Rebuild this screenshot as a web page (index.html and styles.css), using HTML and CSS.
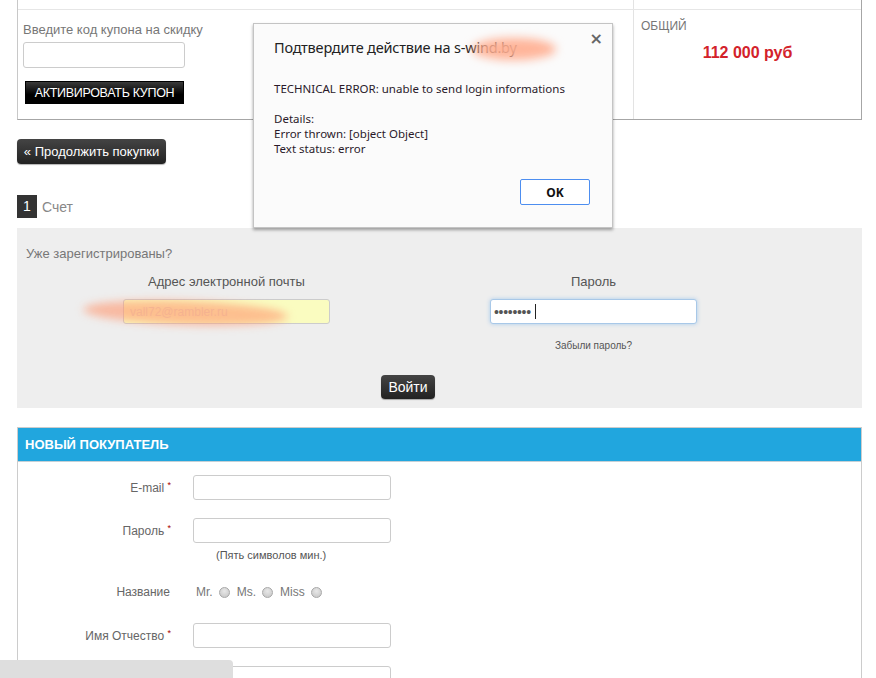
FILE: index.html
```html
<!DOCTYPE html>
<html lang="ru">
<head>
    <meta charset="UTF-8">
    <meta name="viewport" content="width=device-width, initial-scale=1.0">
    <title>Оформление заказа</title>
    <link rel="stylesheet" href="styles.css">
</head>
<body>

<div class="page">

    <!-- корзина: купон и итог -->
    <div class="cart">
        <div class="cart-row cart-prev">
            <div class="cell"></div>
            <div class="cell cell-total"></div>
        </div>
        <div class="cart-row">
            <div class="cell coupon">
                <label class="coupon-label">Введите код купона на скидку</label>
                <input class="field coupon-input" type="text">
                <button class="btn-black">АКТИВИРОВАТЬ КУПОН</button>
            </div>
            <div class="cell cell-total">
                <div class="total-label">ОБЩИЙ</div>
                <div class="total-sum">112 000 руб</div>
            </div>
        </div>
    </div>

    <button class="btn-dark btn-continue">« Продолжить покупки</button>

    <div class="step">
        <span class="step-num">1</span>
        <span class="step-title">Счет</span>
    </div>

    <!-- вход для зарегистрированных -->
    <div class="login">
        <p class="login-title">Уже зарегистрированы?</p>
        <div class="login-cols">
            <div class="login-col">
                <label class="login-label">Адрес электронной почты</label>
                <div class="email-wrap">
                    <input class="field login-input autofill" type="text" value="vall72@rambler.ru">
                    <div class="smear smear-email"></div>
                </div>
            </div>
            <div class="login-col">
                <label class="login-label">Пароль</label>
                <div class="pass-wrap">
                    <input class="field login-input focused" type="password" value="12345678">
                    <span class="caret"></span>
                </div>
                <a class="forgot">Забыли пароль?</a>
            </div>
        </div>
        <div class="login-actions">
            <button class="btn-dark btn-login">Войти</button>
        </div>
    </div>

    <!-- новый покупатель -->
    <div class="register">
        <div class="register-head">НОВЫЙ ПОКУПАТЕЛЬ</div>
        <div class="register-body">
            <div class="form-row">
                <label class="form-label">E-mail <span class="req">*</span></label>
                <input class="field form-input" type="text">
            </div>
            <div class="form-row">
                <label class="form-label">Пароль <span class="req">*</span></label>
                <input class="field form-input" type="password">
            </div>
            <div class="hint">(Пять символов мин.)</div>
            <div class="form-row radio-row">
                <label class="form-label">Название</label>
                <div class="radios">
                    <span>Mr.</span><input class="radio" type="radio" name="title">
                    <span>Ms.</span><input class="radio" type="radio" name="title">
                    <span>Miss</span><input class="radio" type="radio" name="title">
                </div>
            </div>
            <div class="form-row">
                <label class="form-label">Имя Отчество <span class="req">*</span></label>
                <input class="field form-input" type="text">
            </div>
            <div class="form-row">
                <label class="form-label"></label>
                <input class="field form-input" type="text">
            </div>
        </div>
    </div>

</div>

<!-- окно браузера с ошибкой -->
<div class="dialog">
    <span class="dialog-close">×</span>
    <div class="dialog-title">Подтвердите действие на s-wind.by</div>
    <div class="smear smear-title"></div>
    <div class="dialog-text">
        TECHNICAL ERROR: unable to send login informations<br><br>
        Details:<br>
        Error thrown: [object Object]<br>
        Text status: error
    </div>
    <div class="dialog-foot">
        <button class="dialog-ok">OK</button>
    </div>
</div>

<div class="statusbar"></div>

</body>
</html>
```

FILE: styles.css
```css
/* общие */
body {
    margin: 0;
    font-family: 'Liberation Sans', Arial, sans-serif;
    font-size: 13px;
    color: #555;
    background: #fff;
}

.page {
    width: 845px;
    padding-left: 17px;
    padding-bottom: 40px;
}

button {
    font-family: inherit;
    cursor: pointer;
}

.field {
    box-sizing: border-box;
    border: 1px solid #ccc;
    border-radius: 3px;
    background: #fff;
    font-family: inherit;
    font-size: 12px;
    padding: 0 6px;
    outline: none;
}

/* корзина */
.cart {
    border-left: 1px solid #c8c8c8;
    border-right: 1px solid #a6a6a6;
    border-bottom: 1px solid #a6a6a6;
}

.cart-row {
    display: grid;
    grid-template-columns: 615px 1fr;
    height: 109px;
}

.cart-prev {
    height: 9px;
    border-bottom: 1px solid #e6e6e6;
}

.cell-total {
    border-left: 1px solid #e3e3e3;
}

.coupon {
    padding: 12px 0 0 5px;
}

.coupon-label {
    display: block;
    font-size: 13px;
    line-height: 16px;
    color: #777;
}

.coupon-input {
    display: block;
    width: 162px;
    height: 26px;
    margin-top: 4px;
}

.btn-black {
    display: block;
    margin: 13px 0 0 2px;
    width: 159px;
    height: 23px;
    padding: 0;
    border: 1px solid #000;
    background: linear-gradient(#3a3a3a, #000 60%);
    color: #fff;
    font-size: 12.5px;
    letter-spacing: -0.3px;
}

.cell-total {
    padding: 9px 7px 0;
}

.total-label {
    font-size: 12px;
    line-height: 14px;
    color: #777;
}

.total-sum {
    margin-top: 10px;
    text-align: center;
    font-size: 16px;
    line-height: 20px;
    font-weight: bold;
    color: #d3222a;
}

/* тёмные кнопки */
.btn-dark {
    border: none;
    border-radius: 4px;
    background: linear-gradient(#444, #222);
    color: #fff;
    box-shadow: 0 1px 1px rgba(0, 0, 0, .3);
}

.btn-continue {
    display: block;
    margin-top: 19px;
    width: 149px;
    height: 25px;
    padding: 0;
    font-size: 13px;
}

/* шаг */
.step {
    display: flex;
    align-items: center;
    gap: 5px;
    margin-top: 31px;
}

.step-num {
    width: 20px;
    height: 23px;
    line-height: 23px;
    text-align: center;
    background: #333;
    color: #fff;
    font-size: 14px;
}

.step-title {
    font-size: 14px;
    color: #888;
}

/* вход */
.login {
    margin-top: 10px;
    background: #eee;
    padding: 18px 0 9px 9px;
}

.login-title {
    margin: 0;
    font-size: 13px;
    line-height: 16px;
    color: #777;
}

.login-cols {
    display: grid;
    grid-template-columns: 367px 367px;
    margin-left: 17px;
}

.login-col {
    display: flex;
    flex-direction: column;
    align-items: center;
}

.login-label {
    margin-top: 12px;
    font-size: 13px;
    line-height: 16px;
    color: #555;
}

.email-wrap,
.pass-wrap {
    position: relative;
    margin-top: 9px;
}

.login-input {
    display: block;
    width: 207px;
    height: 25px;
    font-size: 12px;
}

.autofill {
    background: #fafcc0;
    color: #e6dcc0;
}

.focused {
    border-color: #a8c8e8;
    box-shadow: 0 0 4px #a9cbeb;
    color: #555;
    font-size: 14px;
    padding-left: 3px;
    letter-spacing: -0.3px;
}

.caret {
    position: absolute;
    left: 45px;
    top: 5px;
    width: 1px;
    height: 15px;
    background: #222;
}

.forgot {
    margin-top: 15px;
    font-size: 10px;
    line-height: 14px;
    color: #555;
}

.login-actions {
    width: 730px;
    margin: 22px 0 0 17px;
    text-align: center;
}

.btn-login {
    width: 54px;
    height: 24px;
    padding: 0;
    font-size: 14px;
}

/* размытые пятна */
.smear {
    position: absolute;
    border-radius: 50%;
    filter: blur(4px);
    background: rgba(255, 150, 110, .6);
}

.smear-email {
    left: -40px;
    top: 2px;
    width: 205px;
    height: 24px;
    transform: rotate(2deg);
}

/* новый покупатель */
.register {
    margin-top: 19px;
    border: 1px solid #ccc;
}

.register-head {
    height: 33px;
    line-height: 33px;
    padding-left: 7px;
    background: #21a6de;
    border-bottom: 1px solid #c4d0d6;
    color: #fff;
    font-size: 13px;
    font-weight: bold;
}

.register-body {
    padding-top: 13px;
}

.form-row {
    display: grid;
    grid-template-columns: 153px 198px;
    column-gap: 22px;
    align-items: center;
    margin-bottom: 18px;
}

.form-label {
    text-align: right;
    font-size: 12px;
    line-height: 14px;
    color: #666;
    margin-top: -3px;
}

.req {
    color: #a00;
    font-size: 9px;
    vertical-align: 4px;
}

.form-input {
    width: 198px;
    height: 25px;
}

.hint {
    margin: -13px 0 0 198px;
    font-size: 11px;
    line-height: 14px;
    color: #555;
}

.radio-row {
    margin-top: 22px;
    margin-bottom: 23px;
    height: 16px;
}

.radio-row .form-label {
    padding-right: 1px;
    margin-top: 0;
}

.radios {
    display: flex;
    align-items: center;
    padding-left: 3px;
    font-size: 12px;
    color: #777;
}

.radio {
    appearance: none;
    box-sizing: border-box;
    width: 11px;
    height: 11px;
    margin: 0 7px 0 6px;
    border: 1px solid #a8a8a8;
    border-radius: 50%;
    background: radial-gradient(circle at 50% 35%, #e8e8e8, #c4c4c4);
}

/* окно подтверждения */
.dialog {
    position: absolute;
    left: 253px;
    top: 23px;
    box-sizing: border-box;
    width: 360px;
    height: 205px;
    display: flex;
    flex-direction: column;
    padding: 13px 22px 22px 20px;
    background: #fbfbfb;
    border: 1px solid #c4c4c4;
    box-shadow: 0 2px 3px rgba(0, 0, 0, .35);
    font-family: 'Noto Sans', 'Open Sans', sans-serif;
    color: #222;
}

.dialog-close {
    position: absolute;
    top: 5px;
    right: 9px;
    font-family: 'DejaVu Sans', sans-serif;
    font-size: 16px;
    font-weight: bold;
    color: #666;
}

.dialog-title {
    font-size: 14.5px;
    line-height: 20px;
    letter-spacing: -0.2px;
}

.smear-title {
    left: 218px;
    top: 14px;
    width: 84px;
    height: 22px;
    filter: blur(5px);
    background: rgba(255, 175, 145, .92);
}

.dialog-text {
    margin-top: 24px;
    font-size: 11.5px;
    line-height: 15px;
    color: #2a1a2a;
}

.dialog-foot {
    margin-top: auto;
    display: flex;
    justify-content: flex-end;
}

.dialog-ok {
    width: 70px;
    height: 26px;
    border: 1px solid #4d8ef0;
    border-radius: 2px;
    background: #fff;
    font-family: 'Noto Sans', 'Open Sans', sans-serif;
    font-size: 12px;
    font-weight: bold;
    color: #111;
}

/* строка состояния браузера */
.statusbar {
    position: fixed;
    left: 0;
    bottom: 0;
    width: 233px;
    height: 18px;
    background: #dedede;
    border-top-right-radius: 4px;
}
```
